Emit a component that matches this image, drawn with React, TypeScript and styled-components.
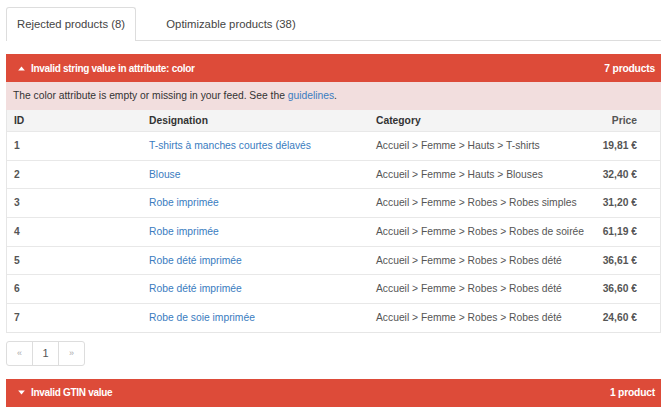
import React from "react";
import styled, { createGlobalStyle } from "styled-components";

const GlobalStyle = createGlobalStyle`
  body {
    margin: 0;
    padding: 7px 6px 0 6px;
    background: #ffffff;
    font-family: "Liberation Sans", Arial, Helvetica, sans-serif;
    color: #333333;
  }
`;

type Product = {
  id: number;
  name: string;
  category: string;
  price: string;
};

const products: Product[] = [
  { id: 1, name: "T-shirts à manches courtes délavés", category: "Accueil > Femme > Hauts > T-shirts", price: "19,81 €" },
  { id: 2, name: "Blouse", category: "Accueil > Femme > Hauts > Blouses", price: "32,40 €" },
  { id: 3, name: "Robe imprimée", category: "Accueil > Femme > Robes > Robes simples", price: "31,20 €" },
  { id: 4, name: "Robe imprimée", category: "Accueil > Femme > Robes > Robes de soirée", price: "61,19 €" },
  { id: 5, name: "Robe dété imprimée", category: "Accueil > Femme > Robes > Robes dété", price: "36,61 €" },
  { id: 6, name: "Robe dété imprimée", category: "Accueil > Femme > Robes > Robes dété", price: "36,60 €" },
  { id: 7, name: "Robe de soie imprimée", category: "Accueil > Femme > Robes > Robes dété", price: "24,60 €" },
];

const Caret = ({ up }: { up: boolean }) => (
  <svg width="7" height="5" viewBox="0 0 8 6">
    {up ? <polygon points="4,0.5 8,5.5 0,5.5" fill="#fff" /> : <polygon points="0,0.5 8,0.5 4,5.5" fill="#fff" />}
  </svg>
);

const App: React.FC = () => {
  return (
    <>
      <GlobalStyle />
      <Tabs>
        <Tab active width={130}>Rejected products (8)</Tab>
        <Tab width={190}>Optimizable products (38)</Tab>
      </Tabs>

      <Section>
        <ErrorHeader>
          <HeaderTitle>
            <Caret up />
            Invalid string value in attribute: color
          </HeaderTitle>
          <HeaderCount>7 products</HeaderCount>
        </ErrorHeader>
        <InfoRow>
          The color attribute is empty or missing in your feed. See the <Link href="#">guidelines</Link>.
        </InfoRow>
        <Table>
          <HeadRow>
            <Cell>ID</Cell>
            <Cell>Designation</Cell>
            <Cell>Category</Cell>
            <PriceCell>Price</PriceCell>
          </HeadRow>
          {products.map((p) => (
            <Row key={p.id}>
              <IdCell>{p.id}</IdCell>
              <Cell>
                <Link href="#">{p.name}</Link>
              </Cell>
              <CategoryCell>{p.category}</CategoryCell>
              <PriceCell>{p.price}</PriceCell>
            </Row>
          ))}
        </Table>
        <Pagination>
          <PageItem muted>«</PageItem>
          <PageItem>1</PageItem>
          <PageItem muted>»</PageItem>
        </Pagination>
      </Section>

      <ErrorHeader>
        <HeaderTitle>
          <Caret up={false} />
          Invalid GTIN value
        </HeaderTitle>
        <HeaderCount>1 product</HeaderCount>
      </ErrorHeader>
    </>
  );
};

export default App;

const Tabs = styled.div`
  display: flex;
  border-bottom: 1px solid #dddddd;
  height: 33px;
`;

const Tab = styled.div<{ active?: boolean; width: number }>`
  width: ${(p) => p.width}px;
  height: ${(p) => (p.active ? 34 : 33)}px;
  box-sizing: border-box;
  display: flex;
  align-items: center;
  justify-content: center;
  font-size: 11.3px;
  color: #444444;
  background: #ffffff;
  border: 1px solid ${(p) => (p.active ? "#dddddd" : "transparent")};
  border-bottom: none;
  border-radius: 3px 3px 0 0;
  padding-bottom: 1px;
`;

const Section = styled.div`
  margin-top: 13px;
`;

const ErrorHeader = styled.div`
  height: 28px;
  background: #dd4b39;
  color: #ffffff;
  font-size: 10px;
  font-weight: bold;
  letter-spacing: -0.3px;
  display: flex;
  align-items: center;
  justify-content: space-between;
  padding: 0 6px 0 12px;
`;

const HeaderTitle = styled.div`
  display: flex;
  align-items: center;
  gap: 6px;
`;

const HeaderCount = styled.span`
  font-size: 10.3px;
  letter-spacing: -0.2px;
`;

const InfoRow = styled.div`
  height: 28px;
  line-height: 28px;
  background: #f2dede;
  color: #333333;
  font-size: 10.3px;
  padding: 0 7px;
`;

const Link = styled.a`
  color: #3a7cc0;
  text-decoration: none;
`;

const Table = styled.div`
  border: 1px solid #e6e6e6;
  border-top: none;
`;

const HeadRow = styled.div`
  display: grid;
  grid-template-columns: 135px 227px minmax(0, 1fr) 100px;
  height: 21px;
  line-height: 21px;
  background: #f4f4f4;
  font-size: 10.3px;
  font-weight: bold;
  color: #333333;
`;

const Row = styled.div`
  display: grid;
  grid-template-columns: 135px 227px minmax(0, 1fr) 100px;
  height: 28.67px;
  line-height: 27.5px;
  font-size: 10.3px;
  border-top: 1px solid #e8e8e8;
  box-sizing: border-box;
  background: #ffffff;
`;

const Cell = styled.div`
  padding: 0 7px;
  white-space: nowrap;
`;

const IdCell = styled(Cell)`
  font-weight: bold;
  color: #555555;
`;

const CategoryCell = styled(Cell)`
  color: #555555;
`;

const PriceCell = styled(Cell)`
  text-align: right;
  padding-right: 23px;
  font-weight: bold;
  color: #555555;
`;

const Pagination = styled.div`
  display: inline-flex;
  margin: 8px 0 13px;
  border: 1px solid #dddddd;
  border-radius: 3px;
  height: 23px;
`;

const PageItem = styled.div<{ muted?: boolean }>`
  width: 25px;
  display: flex;
  align-items: center;
  justify-content: center;
  font-size: ${(p) => (p.muted ? 9 : 11)}px;
  color: ${(p) => (p.muted ? "#aaaaaa" : "#555555")};
  & + & {
    border-left: 1px solid #dddddd;
  }
`;
